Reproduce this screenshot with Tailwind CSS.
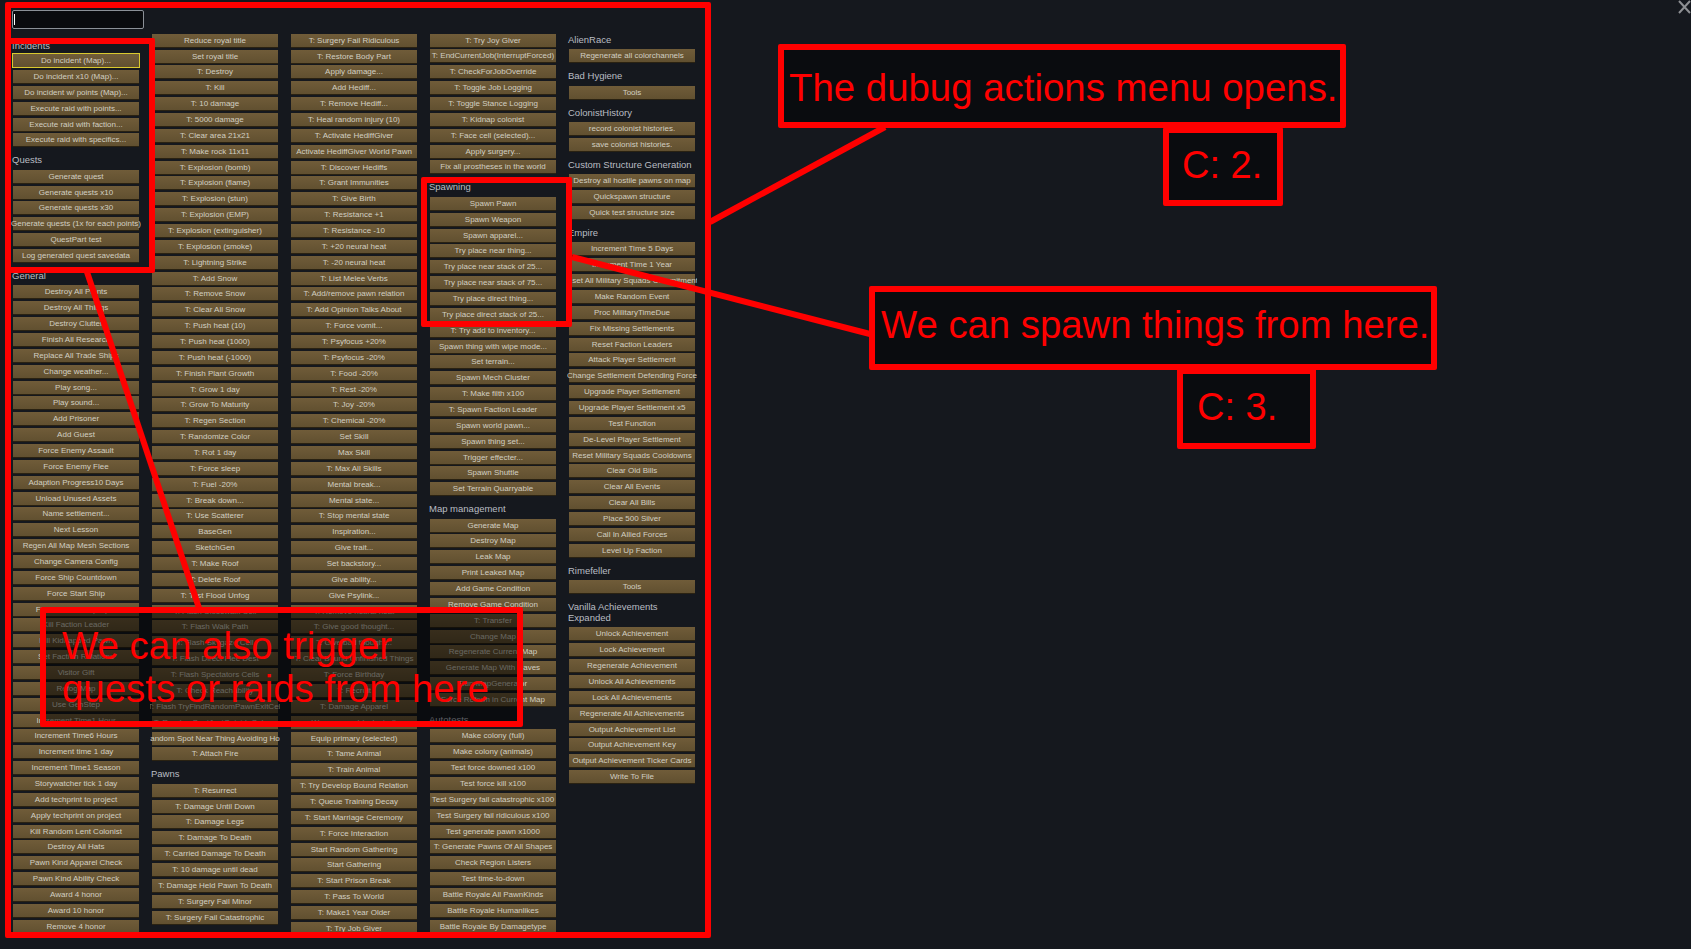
<!DOCTYPE html>
<html lang="en">
<head>
<meta charset="UTF-8">
<title>Debug actions menu</title>
<script src="https://cdn.jsdelivr.net/npm/@tailwindcss/browser@4"></script>
</head>
<body class="bg-[#15181e] overflow-hidden font-['Liberation_Sans',Arial,sans-serif]">
<div class="relative w-[1691px] h-[949px] overflow-hidden">

  <!-- debug menu -->
  <main class="pt-[10px] pl-[11px] h-[936px] overflow-hidden [&_button]:flex [&_button]:justify-center [&_button]:items-center [&_button]:whitespace-nowrap [&_button]:h-[13px] [&_button]:w-[126px] [&_button]:mx-[2px] [&_button]:mb-[2.87px] [&_button]:bg-[linear-gradient(#705c39,#615030)] [&_button]:shadow-[0_1px_0_#2a2212] [&_button]:text-[8px] [&_button]:leading-[13px] [&_button]:text-[#d2cfc2] [&_h3]:text-[9.5px] [&_h3]:leading-[11px] [&_h3]:text-[#b9bdc3] [&_h3]:pt-[5px] [&_h3]:mb-[4.48px] [&_h3]:px-[1px]">
    <div class="ml-[1px] w-[132px] h-[19px] border border-[#8b9097] rounded-[2px] bg-[#0a0b0e] flex items-center pl-[1px]">
      <span class="w-[1px] h-[11px] bg-white"></span>
    </div>
    <div class="flex gap-[9px]">
      <section class="w-[130px] overflow-hidden pt-[4.6px]">
        <h3 class="pt-[6.5px]! mb-[3px]!">Incidents</h3>
        <button class="outline-[1.5px] outline-[#d9c92e]">Do incident (Map)...</button>
        <button>Do incident x10 (Map)...</button>
        <button>Do incident w/ points (Map)...</button>
        <button>Execute raid with points...</button>
        <button>Execute raid with faction...</button>
        <button>Execute raid with specifics...</button>
        <h3>Quests</h3>
        <button>Generate quest</button>
        <button>Generate quests x10</button>
        <button>Generate quests x30</button>
        <button>Generate quests (1x for each points)</button>
        <button>QuestPart test</button>
        <button>Log generated quest savedata</button>
        <h3>General</h3>
        <button>Destroy All Plants</button>
        <button>Destroy All Things</button>
        <button>Destroy Clutter</button>
        <button>Finish All Research</button>
        <button>Replace All Trade Ships</button>
        <button>Change weather...</button>
        <button>Play song...</button>
        <button>Play sound...</button>
        <button>Add Prisoner</button>
        <button>Add Guest</button>
        <button>Force Enemy Assault</button>
        <button>Force Enemy Flee</button>
        <button>Adaption Progress10 Days</button>
        <button>Unload Unused Assets</button>
        <button>Name settlement...</button>
        <button>Next Lesson</button>
        <button>Regen All Map Mesh Sections</button>
        <button>Change Camera Config</button>
        <button>Force Ship Countdown</button>
        <button>Force Start Ship</button>
        <button>Flash Trade Drop Spot</button>
        <button>Kill Faction Leader</button>
        <button>Kill Kidnapped Pawn</button>
        <button>Set Faction Relations</button>
        <button>Visitor Gift</button>
        <button>Refog Map</button>
        <button>Use GenStep</button>
        <button>Increment Time1 Hour</button>
        <button>Increment Time6 Hours</button>
        <button>Increment time 1 day</button>
        <button>Increment Time1 Season</button>
        <button>Storywatcher tick 1 day</button>
        <button>Add techprint to project</button>
        <button>Apply techprint on project</button>
        <button>Kill Random Lent Colonist</button>
        <button>Destroy All Hats</button>
        <button>Pawn Kind Apparel Check</button>
        <button>Pawn Kind Ability Check</button>
        <button>Award 4 honor</button>
        <button>Award 10 honor</button>
        <button>Remove 4 honor</button>
      </section>

      <section class="w-[130px] overflow-hidden pt-[4.7px]">
        <button>Reduce royal title</button>
        <button>Set royal title</button>
        <button>T: Destroy</button>
        <button>T: Kill</button>
        <button>T: 10 damage</button>
        <button>T: 5000 damage</button>
        <button>T: Clear area 21x21</button>
        <button>T: Make rock 11x11</button>
        <button>T: Explosion (bomb)</button>
        <button>T: Explosion (flame)</button>
        <button>T: Explosion (stun)</button>
        <button>T: Explosion (EMP)</button>
        <button>T: Explosion (extinguisher)</button>
        <button>T: Explosion (smoke)</button>
        <button>T: Lightning Strike</button>
        <button>T: Add Snow</button>
        <button>T: Remove Snow</button>
        <button>T: Clear All Snow</button>
        <button>T: Push heat (10)</button>
        <button>T: Push heat (1000)</button>
        <button>T: Push heat (-1000)</button>
        <button>T: Finish Plant Growth</button>
        <button>T: Grow 1 day</button>
        <button>T: Grow To Maturity</button>
        <button>T: Regen Section</button>
        <button>T: Randomize Color</button>
        <button>T: Rot 1 day</button>
        <button>T: Force sleep</button>
        <button>T: Fuel -20%</button>
        <button>T: Break down...</button>
        <button>T: Use Scatterer</button>
        <button>BaseGen</button>
        <button>SketchGen</button>
        <button>T: Make Roof</button>
        <button>T: Delete Roof</button>
        <button>T: Test Flood Unfog</button>
        <button>T: Flash Closewalk Cell</button>
        <button>T: Flash Walk Path</button>
        <button>T: Flash Skygaze Cell</button>
        <button>T: Flash Direct Flee Dest</button>
        <button>T: Flash Spectators Cells</button>
        <button>T: Check Reachability</button>
        <button>T: Flash TryFindRandomPawnExitCell</button>
        <button>T: RandomSpotJustOutsideColony</button>
        <button>T: Random Spot Near Thing Avoiding Hostile</button>
        <button>T: Attach Fire</button>
        <h3>Pawns</h3>
        <button>T: Resurrect</button>
        <button>T: Damage Until Down</button>
        <button>T: Damage Legs</button>
        <button>T: Damage To Death</button>
        <button>T: Carried Damage To Death</button>
        <button>T: 10 damage until dead</button>
        <button>T: Damage Held Pawn To Death</button>
        <button>T: Surgery Fail Minor</button>
        <button>T: Surgery Fail Catastrophic</button>
      </section>

      <section class="w-[130px] overflow-hidden pt-[4.7px]">
        <button>T: Surgery Fail Ridiculous</button>
        <button>T: Restore Body Part</button>
        <button>Apply damage...</button>
        <button>Add Hediff...</button>
        <button>T: Remove Hediff...</button>
        <button>T: Heal random injury (10)</button>
        <button>T: Activate HediffGiver</button>
        <button>Activate HediffGiver World Pawn</button>
        <button>T: Discover Hediffs</button>
        <button>T: Grant Immunities</button>
        <button>T: Give Birth</button>
        <button>T: Resistance +1</button>
        <button>T: Resistance -10</button>
        <button>T: +20 neural heat</button>
        <button>T: -20 neural heat</button>
        <button>T: List Melee Verbs</button>
        <button>T: Add/remove pawn relation</button>
        <button>T: Add Opinion Talks About</button>
        <button>T: Force vomit...</button>
        <button>T: Psyfocus +20%</button>
        <button>T: Psyfocus -20%</button>
        <button>T: Food -20%</button>
        <button>T: Rest -20%</button>
        <button>T: Joy -20%</button>
        <button>T: Chemical -20%</button>
        <button>Set Skill</button>
        <button>Max Skill</button>
        <button>T: Max All Skills</button>
        <button>Mental break...</button>
        <button>Mental state...</button>
        <button>T: Stop mental state</button>
        <button>Inspiration...</button>
        <button>Give trait...</button>
        <button>Set backstory...</button>
        <button>Give ability...</button>
        <button>Give Psylink...</button>
        <button>T: Remove neural heat</button>
        <button>T: Give good thought...</button>
        <button>T: Give bad thought...</button>
        <button>T: Clear Bound Unfinished Things</button>
        <button>T: Force Birthday</button>
        <button>T: Recruit</button>
        <button>T: Damage Apparel</button>
        <button>Wear apparel (selected)</button>
        <button>Equip primary (selected)</button>
        <button>T: Tame Animal</button>
        <button>T: Train Animal</button>
        <button>T: Try Develop Bound Relation</button>
        <button>T: Queue Training Decay</button>
        <button>T: Start Marriage Ceremony</button>
        <button>T: Force Interaction</button>
        <button>Start Random Gathering</button>
        <button>Start Gathering</button>
        <button>T: Start Prison Break</button>
        <button>T: Pass To World</button>
        <button>T: Make1 Year Older</button>
        <button>T: Try Job Giver</button>
      </section>

      <section class="w-[130px] overflow-hidden pt-[4.6px]">
        <button>T: Try Joy Giver</button>
        <button>T: EndCurrentJob(InterruptForced)</button>
        <button>T: CheckForJobOverride</button>
        <button>T: Toggle Job Logging</button>
        <button>T: Toggle Stance Logging</button>
        <button>T: Kidnap colonist</button>
        <button>T: Face cell (selected)...</button>
        <button>Apply surgery...</button>
        <button>Fix all prostheses in the world</button>
        <h3>Spawning</h3>
        <button>Spawn Pawn</button>
        <button>Spawn Weapon</button>
        <button>Spawn apparel...</button>
        <button>Try place near thing...</button>
        <button>Try place near stack of 25...</button>
        <button>Try place near stack of 75...</button>
        <button>Try place direct thing...</button>
        <button>Try place direct stack of 25...</button>
        <button>T: Try add to inventory...</button>
        <button>Spawn thing with wipe mode...</button>
        <button>Set terrain...</button>
        <button>Spawn Mech Cluster</button>
        <button>T: Make filth x100</button>
        <button>T: Spawn Faction Leader</button>
        <button>Spawn world pawn...</button>
        <button>Spawn thing set...</button>
        <button>Trigger effecter...</button>
        <button>Spawn Shuttle</button>
        <button>Set Terrain Quarryable</button>
        <h3>Map management</h3>
        <button>Generate Map</button>
        <button>Destroy Map</button>
        <button>Leak Map</button>
        <button>Print Leaked Map</button>
        <button>Add Game Condition</button>
        <button>Remove Game Condition</button>
        <button>T: Transfer</button>
        <button>Change Map</button>
        <button>Regenerate Current Map</button>
        <button>Generate Map With Caves</button>
        <button>Run MapGenerator</button>
        <button>Force Reform in Current Map</button>
        <h3>Autotests</h3>
        <button>Make colony (full)</button>
        <button>Make colony (animals)</button>
        <button>Test force downed x100</button>
        <button>Test force kill x100</button>
        <button>Test Surgery fail catastrophic x100</button>
        <button>Test Surgery fail ridiculous x100</button>
        <button>Test generate pawn x1000</button>
        <button>T: Generate Pawns Of All Shapes</button>
        <button>Check Region Listers</button>
        <button>Test time-to-down</button>
        <button>Battle Royale All PawnKinds</button>
        <button>Battle Royale Humanlikes</button>
        <button>Battle Royale By Damagetype</button>
      </section>

      <section class="w-[130px] overflow-hidden">
        <h3>AlienRace</h3>
        <button>Regenerate all colorchannels</button>
        <h3>Bad Hygiene</h3>
        <button>Tools</button>
        <h3>ColonistHistory</h3>
        <button>record colonist histories.</button>
        <button>save colonist histories.</button>
        <h3>Custom Structure Generation</h3>
        <button>Destroy all hostile pawns on map</button>
        <button>Quickspawn structure</button>
        <button>Quick test structure size</button>
        <h3>Empire</h3>
        <button>Increment Time 5 Days</button>
        <button>Increment Time 1 Year</button>
        <button>Reset All Military Squads Commitments</button>
        <button>Make Random Event</button>
        <button>Proc MilitaryTimeDue</button>
        <button>Fix Missing Settlements</button>
        <button>Reset Faction Leaders</button>
        <button>Attack Player Settlement</button>
        <button>Change Settlement Defending Force</button>
        <button>Upgrade Player Settlement</button>
        <button>Upgrade Player Settlement x5</button>
        <button>Test Function</button>
        <button>De-Level Player Settlement</button>
        <button>Reset Military Squads Cooldowns</button>
        <button>Clear Old Bills</button>
        <button>Clear All Events</button>
        <button>Clear All Bills</button>
        <button>Place 500 Silver</button>
        <button>Call In Allied Forces</button>
        <button>Level Up Faction</button>
        <h3>Rimefeller</h3>
        <button>Tools</button>
        <h3>Vanilla Achievements Expanded</h3>
        <button>Unlock Achievement</button>
        <button>Lock Achievement</button>
        <button>Regenerate Achievement</button>
        <button>Unlock All Achievements</button>
        <button>Lock All Achievements</button>
        <button>Regenerate All Achievements</button>
        <button>Output Achievement List</button>
        <button>Output Achievement Key</button>
        <button>Output Achievement Ticker Cards</button>
        <button>Write To File</button>
      </section>
    </div>
  </main>

  <!-- close icon -->
  <svg class="absolute left-[1677px] top-0" width="14" height="14" viewBox="0 0 14 14" fill="none" stroke="#8d8f93" stroke-width="2"><path d="M2 1 L13 13 M13 1 L2 13"/></svg>

  <!-- annotations drawn over the screenshot -->
  <svg class="absolute inset-0" width="1691" height="949" fill="none" stroke="#ff0000" stroke-width="6">
    <path d="M87 272 L199 608"/>
    <path d="M572 257 L870 334"/>
    <path d="M710 222 L885 127"/>
  </svg>
  <div class="absolute left-[5px] top-[2px] w-[706px] h-[936px] border-[6px] border-[#ff0000] rounded-[2px]"></div>
  <div class="absolute left-[5px] top-[38px] w-[150px] h-[235px] border-[6px] border-[#ff0000] rounded-[2px]"></div>
  <div class="absolute left-[421px] top-[177px] w-[151px] h-[150px] border-[6px] border-[#ff0000] rounded-[2px]"></div>

  <div class="absolute left-[40px] top-[607px] w-[483px] h-[120px] border-[6px] border-[#ff0000] rounded-[2px] bg-black/50 text-[#ff0000] text-[38.4px] leading-[43px] pl-[16px] pt-[11px] whitespace-nowrap">We can also trigger<br>quests or raids from here</div>

  <div class="absolute left-[778px] top-[44px] w-[568px] h-[84px] border-[6px] border-[#ff0000] rounded-[2px] bg-black/50 text-[#ff0000] text-[38.4px] leading-[75px] pl-[5px] whitespace-nowrap">The dubug actions menu opens.</div>
  <div class="absolute left-[1163px] top-[127px] w-[120px] h-[79px] border-[6px] border-[#ff0000] rounded-[2px] bg-black/50 text-[#ff0000] text-[38px] leading-[65px] pl-[13px] whitespace-nowrap">C: 2.</div>
  <div class="absolute left-[869px] top-[286px] w-[568px] h-[84px] border-[6px] border-[#ff0000] rounded-[2px] bg-black/50 text-[#ff0000] text-[38.3px] leading-[66px] pl-[6px] whitespace-nowrap">We can spawn things from here.</div>
  <div class="absolute left-[1177px] top-[368px] w-[139px] h-[81px] border-[6px] border-[#ff0000] rounded-[2px] bg-black/50 text-[#ff0000] text-[38px] leading-[67px] pl-[14px] whitespace-nowrap">C: 3.</div>
</div>
</body>
</html>
